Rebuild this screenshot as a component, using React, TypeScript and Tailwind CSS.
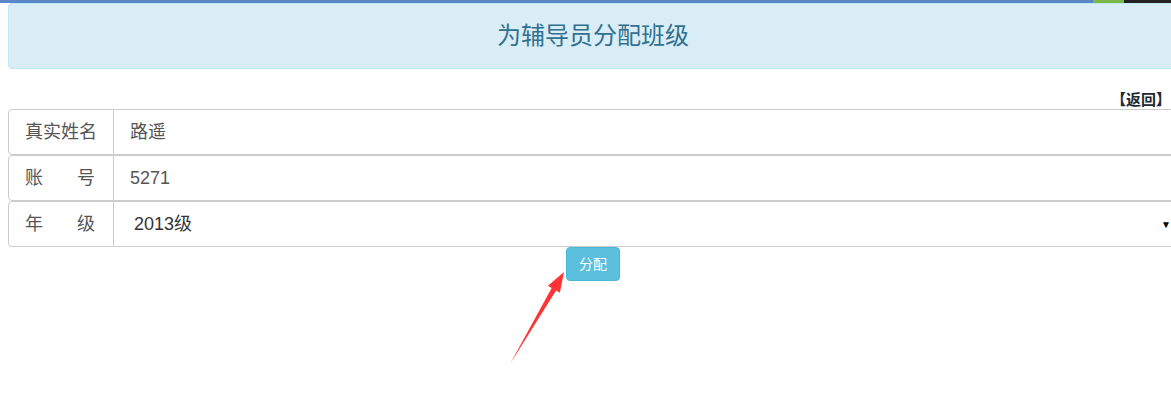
import React from 'react';

const cjk = { fontFamily: '"Liberation Sans", "Noto Sans CJK SC", sans-serif' };

type RowProps = {
  label: string[];
  children: React.ReactNode;
};

function FormRow({ label, children }: RowProps) {
  return (
    <div className="flex h-[46px] rounded-[4px] border border-[#cccccc] text-[18px] text-[#555555]">
      <div className="flex w-[105px] shrink-0 items-center border-r border-[#cccccc] pl-4">
        <div className="flex w-[70px] justify-between">
          {label.map((ch, i) => (
            <span key={i}>{ch}</span>
          ))}
        </div>
      </div>
      <div className="flex flex-1 items-center pl-4">{children}</div>
    </div>
  );
}

export default function App() {
  return (
    <div className="relative h-[397px] w-[1171px] overflow-hidden bg-white" style={cjk}>
      <div className="flex h-[3px]">
        <div className="flex-1 bg-[#5b87c6]" />
        <div className="w-[31px] bg-[#7ab648]" />
        <div className="w-[47px] bg-[#222222]" />
      </div>

      <div className="ml-2 w-[1170px]">
        <div className="flex h-[66px] items-center justify-center rounded-[4px] border border-[#bce8f1] bg-[#d9edf7]">
          <h3 className="text-[24px] text-[#31708f]">为辅导员分配班级</h3>
        </div>

        <div className="mt-[21px] h-[19px] pr-[7px] text-right text-[15px] font-bold leading-[19px] text-[#222831]">
          【返回】
        </div>

        <FormRow label={['真', '实', '姓', '名']}>路遥</FormRow>
        <FormRow label={['账', '号']}>5271</FormRow>
        <FormRow label={['年', '级']}>
          <div className="flex flex-1 items-center justify-between pl-1 pr-[6px]">
            <span className="text-[#333333]">2013级</span>
            <span className="text-[10px] text-black">▼</span>
          </div>
        </FormRow>

        <button
          type="button"
          className="ml-[558px] h-[34px] w-[54px] rounded-[4px] border border-[#46b8da] bg-[#5bc0de] text-[14px] text-white"
        >
          分配
        </button>
      </div>

      <svg className="pointer-events-none absolute left-0 top-0" width="1171" height="397">
        <polygon
          points="510,364 551.7,287.9 547.9,285.7 564,272 559.9,292.7 556.1,290.5"
          fill="#ff3333"
        />
      </svg>
    </div>
  );
}
